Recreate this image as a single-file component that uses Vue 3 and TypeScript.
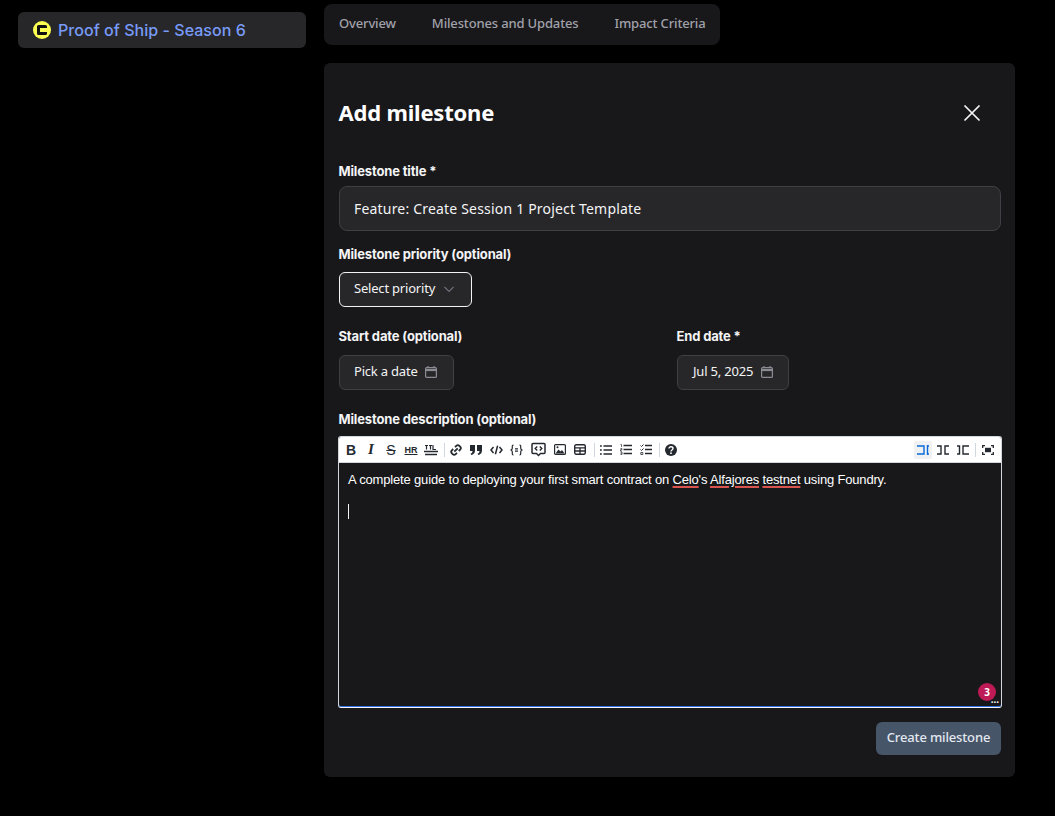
<script setup lang="ts">
const tabs = ['Overview', 'Milestones and Updates', 'Impact Criteria']
</script>

<template>
  <div class="page">
    <aside class="sidebar">
      <div class="program">
        <svg class="celo" width="18" height="18" viewBox="0 0 18 18">
          <circle cx="9" cy="9" r="9" fill="#fcff52" />
          <path d="M14 5.500A1.500 1.500 0 0012.500 4h-7A1.500 1.500 0 004 5.500v7A1.500 1.500 0 005.500 14h7a1.500 1.500 0 001.500-1.500V11H7V7h7z" fill="#111" />
        </svg>
        <span>Proof of Ship - Season 6</span>
      </div>
    </aside>

    <main class="main">
      <nav class="tabs">
        <span v-for="tab in tabs" :key="tab" class="tab">{{ tab }}</span>
      </nav>

      <section class="card">
        <header class="card-head">
          <h1>Add milestone</h1>
          <svg width="20" height="20" viewBox="0 0 20 20" fill="none" stroke="#f4f4f5" stroke-width="1.700">
            <path d="M2.500 2.500l15 15M17.500 2.500l-15 15" />
          </svg>
        </header>

        <label class="label first">Milestone title *</label>
        <div class="input">Feature: Create Session 1 Project Template</div>

        <label class="label second">Milestone priority (optional)</label>
        <div class="select">
          Select priority
          <svg width="12" height="12" viewBox="0 0 12 12" fill="none" stroke="#71717a" stroke-width="1.100">
            <path d="M1.500 4l4.500 4.500L10.500 4" />
          </svg>
        </div>

        <div class="dates">
          <div class="date-col start">
            <label class="label">Start date (optional)</label>
            <div class="date-btn">
              Pick a date
              <svg width="14" height="14" viewBox="0 0 14 14" fill="none" stroke="#8b8b93" stroke-width="1.200">
                <rect x="1.600" y="2.600" width="10.800" height="9.800" rx="1" />
                <path d="M1.600 5h10.800" stroke-width="2.200" />
                <path d="M4 1v2M10 1v2" />
              </svg>
            </div>
          </div>
          <div class="date-col">
            <label class="label">End date *</label>
            <div class="date-btn end">
              Jul 5, 2025
              <svg width="14" height="14" viewBox="0 0 14 14" fill="none" stroke="#8b8b93" stroke-width="1.200">
                <rect x="1.600" y="2.600" width="10.800" height="9.800" rx="1" />
                <path d="M1.600 5h10.800" stroke-width="2.200" />
                <path d="M4 1v2M10 1v2" />
              </svg>
            </div>
          </div>
        </div>

        <label class="label third">Milestone description (optional)</label>
        <div class="editor">
          <div class="toolbar">
            <div class="tool-group">
              <span class="tool glyph bold">B</span>
              <span class="tool glyph italic">I</span>
              <span class="tool glyph strike">S</span>
              <span class="tool glyph hr">HR</span>
              <span class="tool">
                <svg width="14" height="12" viewBox="0 0 14 12" fill="none" stroke="#24292f">
                  <path d="M1 1.500h3M2.500 1.500v4M5 1.500h3M6.500 1.500v4M9 1v4.500h3" stroke-width="1.200" />
                  <path d="M0 7.500h14M1 10.500h12" stroke-width="1.400" />
                </svg>
              </span>
              <i class="divider" />
              <span class="tool">
                <svg width="12" height="12" viewBox="0 0 12 12" fill="none" stroke="#24292f" stroke-width="1.800">
                  <path d="M5 3.200l1.300-1.300a2.200 2.200 0 013.100 0l.7.700a2.200 2.200 0 010 3.100L8.800 7" />
                  <path d="M7 8.800l-1.300 1.300a2.200 2.200 0 01-3.100 0l-.7-.7a2.200 2.200 0 010-3.100L3.200 5" />
                  <path d="M4.300 7.700l3.400-3.400" />
                </svg>
              </span>
              <span class="tool">
                <svg width="12" height="10" viewBox="0 0 12 10" fill="#24292f">
                  <path d="M0 0h5v5.500C5 8 3.500 9.500 1.200 10L.6 8.800C1.900 8.300 2.500 7.500 2.500 6H0zM7 0h5v5.500C12 8 10.500 9.500 8.200 10l-.6-1.200C8.900 8.300 9.500 7.500 9.500 6H7z" />
                </svg>
              </span>
              <span class="tool">
                <svg width="13" height="10" viewBox="0 0 13 10" fill="none" stroke="#24292f" stroke-width="1.500">
                  <path d="M3.500 2L1 5l2.500 3M9.500 2L12 5 9.500 8M7.600 .8L5.400 9.200" />
                </svg>
              </span>
              <span class="tool">
                <svg width="13" height="12" viewBox="0 0 13 12" fill="none" stroke="#24292f" stroke-width="1.200">
                  <path d="M3.500 1C2 1 2.300 2.500 2.300 4S1.800 5.500 1 6c.8.500 1.300.500 1.300 2s-.3 3 1.200 3M9.500 1c1.500 0 1.200 1.500 1.200 3s.5 1.500 1.300 2c-.8.500-1.300.500-1.300 2s.3 3-1.200 3M5 4.800h3M5 7.200h3" />
                </svg>
              </span>
              <span class="tool wide">
                <svg width="15" height="15" viewBox="0 0 15 15" fill="none" stroke="#24292f" stroke-width="1.500">
                  <path d="M2 1.500h11a1 1 0 011 1v8a1 1 0 01-1 1H9.500l-2 2-2-2H2a1 1 0 01-1-1v-8a1 1 0 011-1z" />
                  <path d="M6.200 4.500L4.200 6.500l2 2M8.800 4.500l2 2-2 2" stroke-width="1.400" />
                </svg>
              </span>
              <span class="tool">
                <svg width="12" height="11" viewBox="0 0 12 11">
                  <rect x=".6" y=".6" width="10.800" height="9.800" rx="1" fill="none" stroke="#24292f" stroke-width="1.200" />
                  <path d="M1.500 9.500l3-4 2 2 1.500-1.500 2.500 3.500z" fill="#24292f" />
                  <circle cx="3.500" cy="3.200" r="1" fill="#24292f" />
                </svg>
              </span>
              <span class="tool">
                <svg width="12" height="11" viewBox="0 0 12 11" fill="none" stroke="#24292f">
                  <rect x=".7" y=".7" width="10.600" height="9.600" rx="1.500" stroke-width="1.400" />
                  <path d="M.7 3.800h10.600M.7 7h10.600M6 3.800v6.500" stroke-width="1.300" />
                </svg>
              </span>
              <i class="divider list-sep" />
              <span class="tool">
                <svg width="12" height="10" viewBox="0 0 12 10" fill="none" stroke="#24292f" stroke-width="1.400">
                  <path d="M3.500 1H12M3.500 5H12M3.500 9H12M0 1h1.800M0 5h1.800M0 9h1.800" />
                </svg>
              </span>
              <span class="tool">
                <svg width="12" height="11" viewBox="0 0 12 11" fill="none" stroke="#24292f">
                  <path d="M3.500 1.500H12M3.500 5.500H12M3.500 9.500H12" stroke-width="1.400" />
                  <path d="M.5 .5h1v2.500M.5 4.500h1.500v1.200H.5v1.300H2M.5 8h1.500v2.500H.5M.5 9.300H2" stroke-width=".7" />
                </svg>
              </span>
              <span class="tool">
                <svg width="12" height="11" viewBox="0 0 12 11" fill="none" stroke="#24292f">
                  <path d="M5 1.500h7M5 5.500h7M5 9.500h7" stroke-width="1.400" />
                  <path d="M.5 1.500l1 1 2-2M.5 5.500l1 1 2-2" stroke-width="1" />
                  <path d="M.8 8.500h2v2h-2z" stroke-width=".8" />
                </svg>
              </span>
              <i class="divider" />
              <span class="tool">
                <svg width="12" height="12" viewBox="0 0 12 12">
                  <circle cx="6" cy="6" r="6" fill="#24292f" />
                  <path d="M4 4.600C4 3.400 4.900 2.800 6 2.800s2 .7 2 1.700c0 1.500-2 1.400-2 2.900" fill="none" stroke="#fff" stroke-width="1.400" />
                  <circle cx="6" cy="9.200" r=".9" fill="#fff" />
                </svg>
              </span>
            </div>
            <div class="tool-group right">
              <span class="tool small active">
                <svg width="12" height="10" viewBox="0 0 12 10" fill="none" stroke="#0969da" stroke-width="1.400">
                  <path d="M0 1h7v8H0M10.500 0v10M11 1h1M11 9h1" />
                </svg>
              </span>
              <span class="tool small">
                <svg width="12" height="10" viewBox="0 0 12 10" fill="none" stroke="#24292f" stroke-width="1.400">
                  <path d="M0 1h4v8H0M12 1H8v8h4" />
                </svg>
              </span>
              <span class="tool small">
                <svg width="12" height="10" viewBox="0 0 12 10" fill="none" stroke="#24292f" stroke-width="1.400">
                  <path d="M0 1h2.500v8H0M12 1H6v8h6" />
                </svg>
              </span>
              <i class="divider" />
              <span class="tool small">
                <svg width="12" height="10" viewBox="0 0 12 10" fill="none" stroke="#24292f" stroke-width="1.300">
                  <path d="M.7 3V.7H3M9 .7h2.300V3M11.300 7v2.300H9M3 9.300H.7V7" />
                  <rect x="3" y="2.800" width="6" height="4.400" fill="#24292f" stroke="none" />
                </svg>
              </span>
            </div>
          </div>
          <div class="editor-body">
            <p>
              A complete guide to deploying your first smart contract on
              <span class="typo">Celo</span>'s <span class="typo">Alfajores</span>&nbsp;<span class="typo">testnet</span> using Foundry.
            </p>
            <i class="caret" />
          </div>
          <span class="badge">3</span>
          <span class="grip">...</span>
        </div>

        <div class="actions">
          <button class="create" type="button">Create milestone</button>
        </div>
      </section>
    </main>
  </div>
</template>

<style>
body {
  background: #000;
}
</style>

<style scoped>
.page {
  display: flex;
  align-items: flex-start;
  gap: 18px;
  height: 816px;
  padding-left: 18px;
  box-sizing: border-box;
  background: #000;
  overflow: hidden;
  font-family: 'Noto Sans', sans-serif;
}

.sidebar {
  width: 288px;
  padding-top: 12px;
}

.program {
  display: flex;
  align-items: center;
  gap: 7px;
  height: 36px;
  padding-left: 15px;
  border-radius: 6px;
  background: #27272a;
  color: #789bf8;
  font: 500 16px/36px Inter, sans-serif;
  letter-spacing: 0.04px;
}

.main {
  width: 691px;
  padding-top: 4px;
}

.tabs {
  display: flex;
  gap: 36px;
  width: 396px;
  height: 41px;
  box-sizing: border-box;
  padding: 0 15px 4px;
  align-items: center;
  border-radius: 8px;
  background: #18181b;
}

.tab {
  color: #a1a1aa;
  font-size: 13px;
  font-weight: 500;
  letter-spacing: -0.15px;
  white-space: nowrap;
}

.card {
  margin-top: 18px;
  height: 714px;
  box-sizing: border-box;
  padding: 0 14px 0 15px;
  border-radius: 6px;
  background: #18181b;
  color: #f4f4f5;
}

.card-head {
  display: flex;
  justify-content: space-between;
  align-items: center;
  height: 32px;
  padding: 34px 19px 0 0;
}

h1 {
  margin: -2px 0 0 -0.5px;
  font-size: 22px;
  font-weight: 700;
  letter-spacing: -0.2px;
  color: #fff;
}

.label {
  display: block;
  margin-left: -0.5px;
  font: 700 13px/18px Inter, sans-serif;
  letter-spacing: -0.15px;
  color: #f4f4f5;
}

.first {
  margin-top: 33px;
}

.second {
  margin-top: 14px;
}

.third {
  margin-top: 20px;
}

.input {
  margin-top: 6px;
  height: 45px;
  box-sizing: border-box;
  padding-left: 14px;
  border: 1px solid #3f3f46;
  border-radius: 8px;
  background: #27272a;
  font-size: 14px;
  letter-spacing: 0.19px;
  line-height: 43px;
}

.select {
  display: flex;
  align-items: center;
  gap: 8px;
  width: 133px;
  height: 35px;
  margin-top: 9px;
  box-sizing: border-box;
  padding: 0 0 4px 14px;
  border: 1px solid #f4f4f5;
  border-radius: 6px;
  background: #27272a;
  font-size: 13px;
  letter-spacing: -0.2px;
}

.select svg,
.date-btn svg {
  margin-top: 2px;
}

.dates {
  display: flex;
  margin-top: 20px;
}

.date-col {
  display: flex;
  flex-direction: column;
  align-items: flex-start;
}

.start {
  width: 338px;
}

.date-btn {
  display: flex;
  align-items: center;
  gap: 6px;
  height: 35px;
  margin-top: 10px;
  box-sizing: border-box;
  padding: 0 15px 4px 14px;
  border: 1px solid #3f3f46;
  border-radius: 6px;
  background: #27272a;
  font-size: 13px;
  letter-spacing: -0.2px;
}

.end {
  padding-left: 15px;
  gap: 7px;
  padding-right: 14px;
}

.editor {
  position: relative;
  height: 272px;
  margin: 8px -1px 0;
  box-sizing: border-box;
  border: 1px solid #d0d7de;
  border-bottom: 1px solid #f4f4f5;
  border-radius: 3px;
  background: #18181b;
  box-shadow: inset 0 -1px 0 #2f6fe4;
  font-family: 'Liberation Sans', Arial, sans-serif;
}

.toolbar {
  display: flex;
  justify-content: space-between;
  height: 26px;
  box-sizing: border-box;
  padding: 0 4px 0 2px;
  background: #fff;
  border-bottom: 1px solid #d0d7de;
  border-radius: 2px 2px 0 0;
}

.tool-group {
  display: flex;
  align-items: center;
}

.right {
  gap: 2px;
}

.tool {
  display: flex;
  align-items: center;
  justify-content: center;
  width: 20px;
  height: 18px;
  color: #24292f;
  border-radius: 2px;
}

.wide {
  width: 23px;
  margin-left: 1px;
}

.small {
  width: 18px;
}

.active {
  background: #eff1f3;
}

.glyph {
  font-size: 14px;
}

.bold {
  font-weight: 700;
}

.italic {
  font-family: 'Liberation Serif', serif;
  font-style: italic;
  font-weight: 700;
  font-size: 15px;
}

.strike {
  text-decoration: line-through;
}

.hr {
  font-size: 9px;
  font-weight: 700;
  text-decoration: underline;
}

.divider {
  display: block;
  width: 1px;
  height: 14px;
  margin: 0 1px 0 3px;
  background: #d0d7de;
}

.list-sep {
  margin-left: 4px;
}

.right .divider {
  margin: 0 1px;
}

.editor-body {
  padding: 9px 9px;
  color: #fff;
  font-size: 13px;
  letter-spacing: -0.17px;
  line-height: 16px;
}

.editor-body p {
  margin: 0;
}

.typo {
  text-decoration: underline;
  text-decoration-color: #d9534f;
  text-decoration-thickness: 2px;
  text-underline-offset: 2px;
}

.caret {
  display: block;
  width: 1px;
  height: 15px;
  margin-top: 16px;
  background: #f4f4f5;
}

.badge {
  position: absolute;
  right: 5px;
  bottom: 6px;
  width: 18px;
  height: 18px;
  border-radius: 50%;
  background: #be1a56;
  color: #fff;
  font: 700 10px/18px 'Noto Sans', sans-serif;
  text-align: center;
}

.grip {
  position: absolute;
  right: 2px;
  bottom: 4px;
  color: #f4f4f5;
  font: 700 10px/6px 'Liberation Sans', sans-serif;
}

.actions {
  display: flex;
  justify-content: flex-end;
  margin-top: 14px;
}

.create {
  width: 125px;
  height: 33px;
  padding: 0 0 4px;
  border: 0;
  border-radius: 6px;
  background: #475569;
  color: #e2e8f0;
  font: 500 13px 'Noto Sans', sans-serif;
  letter-spacing: -0.15px;
}
</style>
